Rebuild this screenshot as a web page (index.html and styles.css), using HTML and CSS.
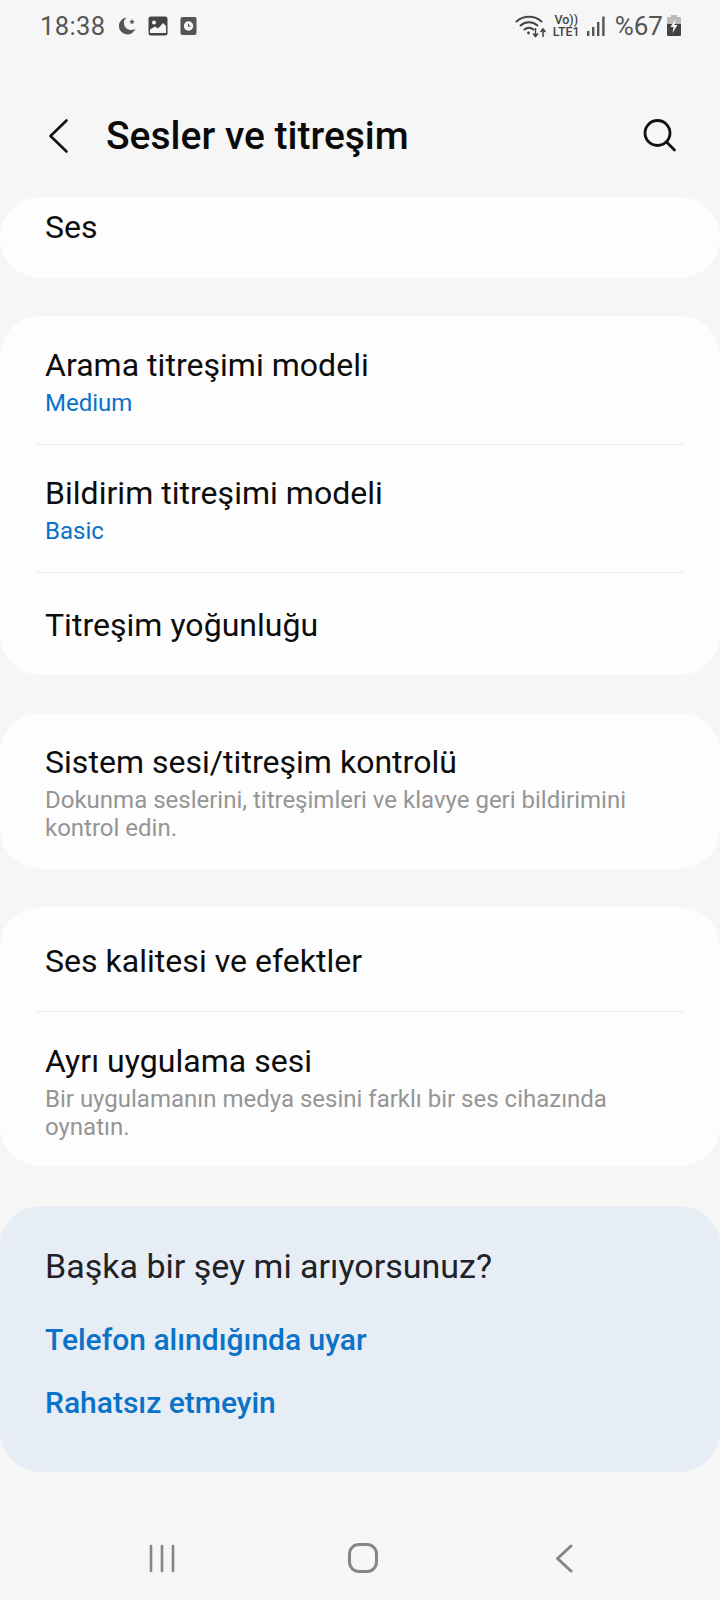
FILE: index.html
```html
<!DOCTYPE html>
<html lang="tr">
<head>
<meta charset="utf-8">
<title>Sesler ve titreşim</title>
<link rel="stylesheet" href="styles.css">
</head>
<body>
<div class="screen">
  <div class="status">
    <div class="status-left">
      <span class="time">18:38</span>
      <svg class="ic moon" viewBox="0 0 18 20" width="18" height="20"><path fill="#555" d="M8.500 1.500a8.500 8.500 0 1 0 9 11 6.400 6.400 0 0 1-9-11z"/><path fill="#555" d="M14 3l.8 1.800 1.800.3-1.300 1.200.3 1.800-1.600-.9-1.600.9.300-1.800-1.300-1.200 1.800-.3z"/></svg>
      <svg class="ic pic" viewBox="0 0 20 20" width="20" height="20"><rect x="0.500" y="0.500" width="19" height="19" rx="2.500" fill="#444"/><circle cx="6" cy="6.500" r="2" fill="#f6f6f6"/><path fill="#f6f6f6" d="M2 17v-3.500l5-3 3 2 5-5.500 3 3V17z"/></svg>
      <svg class="ic clock" viewBox="0 0 18 20" width="17" height="20"><rect x="0.500" y="0.500" width="17" height="19" rx="2" fill="#555"/><circle cx="9" cy="10" r="5" fill="#f6f6f6"/><path stroke="#555" stroke-width="1.200" fill="none" d="M9 7.500V10.300H11.200"/></svg>
    </div>
    <div class="status-right">
      <svg class="wifi" viewBox="0 0 32 24" width="32" height="24"><g fill="none" stroke="#444" stroke-width="2" stroke-linecap="round"><path d="M1.500 7.500a19 19 0 0 1 25 0"/><path d="M5.500 11.500a13 13 0 0 1 17 0"/><path d="M9.500 15.500a7 7 0 0 1 9 0"/></g><circle cx="13.500" cy="19" r="1.400" fill="#444"/><path d="M20.500 14v8M18 19.500l2.500 3 2.500-3M28 23v-8M25.500 18l2.500-3 2.500 3" fill="none" stroke="#444" stroke-width="1.500"/></svg>
      <div class="volte"><span>Vo))</span><span>LTE1</span></div>
      <svg class="signal" viewBox="0 0 18 21" width="18" height="21"><g fill="#555"><rect x="0" y="15" width="2.400" height="5"/><rect x="5" y="11" width="2.400" height="9"/><rect x="10" y="6" width="2.400" height="14"/><rect x="15.200" y="0.500" width="2.400" height="19.500"/></g></svg>
      <span class="pct">%67</span>
      <svg class="batt" viewBox="0 0 14 22" width="14" height="22"><path fill="#bbb" d="M4 0h6v2h3a1 1 0 0 1 1 1v7H0V3a1 1 0 0 1 1-1h3z"/><path fill="#444" d="M0 9h14v11a1 1 0 0 1-1 1H1a1 1 0 0 1-1-1z"/><path fill="#f6f6f6" d="M8.500 4L3.500 12h3l-1 6 5-8h-3z"/></svg>
    </div>
  </div>

  <header class="appbar">
    <svg class="back" viewBox="0 0 24 36" width="24" height="36"><path d="M20.500 2.500L4.500 18l16 15.500" fill="none" stroke="#111" stroke-width="2.600" stroke-linecap="round" stroke-linejoin="round"/></svg>
    <h1 class="title">Sesler ve titreşim</h1>
    <svg class="search" viewBox="0 0 36 36" width="36" height="36"><circle cx="15.500" cy="15" r="12.500" fill="none" stroke="#111" stroke-width="2.800"/><path d="M24.500 24l8 8" fill="none" stroke="#111" stroke-width="2.800" stroke-linecap="round"/></svg>
  </header>

  <main class="content">
    <section class="card card-ses">
      <div class="row-title">Ses</div>
    </section>

    <section class="card">
      <div class="row row-a">
        <div class="row-title">Arama titreşimi modeli</div>
        <div class="row-value">Medium</div>
      </div>
      <div class="divider"></div>
      <div class="row row-b">
        <div class="row-title">Bildirim titreşimi modeli</div>
        <div class="row-value">Basic</div>
      </div>
      <div class="divider"></div>
      <div class="row row-c">
        <div class="row-title">Titreşim yoğunluğu</div>
      </div>
    </section>

    <section class="card">
      <div class="row row-d">
        <div class="row-title">Sistem sesi/titreşim kontrolü</div>
        <div class="row-sub">Dokunma seslerini, titreşimleri ve klavye geri bildirimini kontrol edin.</div>
      </div>
    </section>

    <section class="card">
      <div class="row row-e">
        <div class="row-title">Ses kalitesi ve efektler</div>
      </div>
      <div class="divider"></div>
      <div class="row row-f">
        <div class="row-title">Ayrı uygulama sesi</div>
        <div class="row-sub">Bir uygulamanın medya sesini farklı bir ses cihazında oynatın.</div>
      </div>
    </section>

    <section class="suggest">
      <div class="suggest-title">Başka bir şey mi arıyorsunuz?</div>
      <a class="suggest-link">Telefon alındığında uyar</a>
      <a class="suggest-link">Rahatsız etmeyin</a>
    </section>
  </main>

  <nav class="navbar">
    <svg viewBox="0 0 28 30" width="28" height="30"><g stroke="#858585" stroke-width="2.600" stroke-linecap="round"><path d="M3 3v25M14 3v25M25 3v25"/></g></svg>
    <svg class="nav-home" viewBox="0 0 32 32" width="32" height="32"><rect x="2.500" y="2.500" width="27" height="27" rx="9.500" fill="none" stroke="#858585" stroke-width="3"/></svg>
    <svg viewBox="0 0 20 30" width="20" height="30"><path d="M17 3L3.500 15.500 17 28" fill="none" stroke="#858585" stroke-width="3" stroke-linecap="round" stroke-linejoin="round"/></svg>
  </nav>
</div>
</body>
</html>
```
FILE: styles.css
```css
* { box-sizing: border-box; }
html, body { margin: 0; padding: 0; }
body { background: #f6f6f6; font-family: Roboto, "Noto Sans", sans-serif; }
.screen { width: 720px; height: 1600px; display: flex; flex-direction: column; overflow: hidden; background: #f6f6f6; }

.status { height: 50px; padding: 2px 39px 0 40px; display: flex; justify-content: space-between; align-items: center; }
.status-left, .status-right { display: flex; align-items: center; }
.time { font-size: 25.500px; color: #555; letter-spacing: 0.400px; margin-right: 12px; }
.moon { margin-right: 12px; }
.pic { margin-right: 12px; }
.wifi { margin-right: 6px; }
.volte { display: flex; flex-direction: column; font-size: 12.500px; line-height: 12px; font-weight: 500; color: #444; align-items: center; margin-right: 7px; }
.signal { margin-right: 10px; }
.pct { font-size: 26px; color: #555; margin-right: 4px; }

.appbar { height: 116px; padding: 56px 0 0 46px; display: flex; align-items: center; }
.back { margin-right: 36px; }
.title { margin: 0; flex: 1; font-size: 39px; font-weight: 500; color: #0a0a0a; }
.search { margin-right: 42px; }

.content { display: flex; flex-direction: column; padding-top: 31px; gap: 38px; }
.card { background: #fdfdfd; border-radius: 40px; display: flex; flex-direction: column; }
.card-ses { height: 81px; padding: 12px 45px 0; }
.row { padding: 0 45px; }
.row-title { font-size: 32px; line-height: 36px; letter-spacing: 0.030px; color: #0c0c0c; }
.row-value { font-size: 24px; line-height: 30px; color: #0a72c7; margin-top: 5px; }
.row-sub { font-size: 24px; line-height: 28px; color: #959595; margin-top: 6px; }
.row-a { height: 128px; padding-top: 31px; }
.row-b { height: 127px; padding-top: 30px; }
.row-c { height: 102px; padding-top: 34px; }
.row-d { height: 156px; padding-top: 31px; }
.row-e { height: 104px; padding-top: 36px; }
.row-f { height: 154px; padding-top: 31px; }
.divider { height: 1px; background: #ebebeb; margin: 0 36px; }

.suggest { height: 266px; margin-top: 2px; background: #e7edf4; border-radius: 40px; padding: 42px 45px 0; display: flex; flex-direction: column; }
.suggest-title { font-size: 34px; line-height: 36px; color: #1f2226; margin-bottom: 39px; }
.suggest-link { font-size: 30px; line-height: 34px; font-weight: 500; color: #0a72c7; margin-bottom: 29px; }

.navbar { position: fixed; left: 0; right: 0; top: 1541px; height: 34px; padding: 0 146px 0 148px; display: flex; justify-content: space-between; align-items: center; }
.nav-home { margin-right: 4px; }
```
